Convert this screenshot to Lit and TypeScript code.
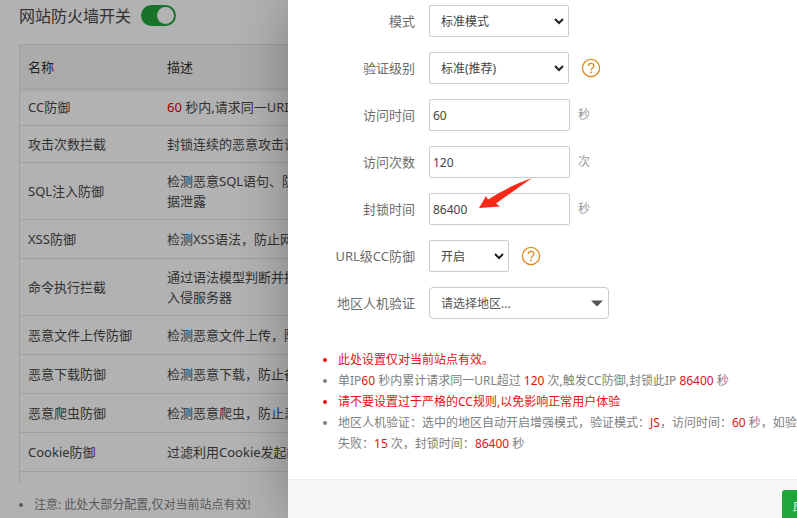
import { LitElement, html, css, svg } from "lit";
import { customElement } from "lit/decorators.js";

const rows: [string, unknown][] = [
  ["CC防御", html`<b class="hot">60</b> 秒内,请求同一URI累计超过`],
  ["攻击次数拦截", "封锁连续的恶意攻击请求"],
  ["SQL注入防御", html`检测恶意SQL语句、防止数<br />据泄露`],
  ["XSS防御", "检测XSS语法，防止网站被攻击"],
  ["命令执行拦截", html`通过语法模型判断并拦截<br />入侵服务器`],
  ["恶意文件上传防御", "检测恶意文件上传，防止网站被攻击"],
  ["恶意下载防御", "检测恶意下载，防止备份文件泄露"],
  ["恶意爬虫防御", "检测恶意爬虫，防止恶意采集"],
  ["Cookie防御", "过滤利用Cookie发起的攻击"],
];

@customElement("help-mark")
class HelpMark extends LitElement {
  static styles = css`
    :host { display: inline-flex; margin-left: 12px; }
    a { display: flex; color: #dd8a23; }
  `;
  render() {
    return html`<a href="#" aria-label="帮助"><svg width="20" height="20" viewBox="0 0 20 20" fill="none" stroke="currentColor">
      ${svg`<circle cx="10" cy="10" r="8.6" stroke-width="1.3"/><path d="M7.3 8.1C7.3 4.5 12.9 4.5 12.9 7.9C12.9 10 10.1 10 10.1 12.3" stroke-width="1.4"/><path d="M10.1 13.6V15.2" stroke-width="1.6"/>`}
    </svg></a>`;
  }
}

@customElement("firewall-page")
class FirewallPage extends LitElement {
  static styles = css`
    :host { display: block; padding: 0 20px 0 19px; color: #484848; }
    .switch-row { display: flex; align-items: center; gap: 10px; height: 30px; font-size: 16px; }
    .toggle {
      appearance: none; width: 35px; height: 21px; margin: 0; padding: 2px;
      border-radius: 11px; background: #20a53a; display: flex; justify-content: flex-end;
    }
    .toggle::before { content: ""; width: 17px; height: 17px; border-radius: 50%; background: #fff; }
    .box { margin-top: 14px; border: 1px solid #e4e4e4; border-bottom: 0; border-right: 0; height: 438px; overflow: hidden; }
    table { border-collapse: separate; border-spacing: 0; width: 100%; font-size: 13px; line-height: 20px; white-space: nowrap; }
    th, td { box-sizing: border-box; padding: 0 8px; text-align: left; font-weight: 400; }
    th { height: 44px; background: #f5f5f5; border-bottom: 1px solid #e8e8e8; color: #333; box-shadow: 0 2px 2px #eee; }
    th:first-child { width: 139px; }
    td { height: 39px; border-bottom: 1px solid #e4e4e4; }
    tr.compact td { height: 37px; }
    tr.tall td { height: 57px; }
    .hot { color: #e60000; font-weight: 400; }
    ul { margin: 11px 0 0; padding: 0 0 0 15px; font-size: 12px; line-height: 21px; color: #808080; }
  `;
  render() {
    return html`
      <div class="switch-row">
        <label for="fw">网站防火墙开关</label>
        <input id="fw" class="toggle" type="checkbox" checked />
      </div>
      <div class="box">
        <table>
          <thead><tr><th>名称</th><th>描述</th></tr></thead>
          <tbody>
            ${rows.map(([name, text], i) => html`<tr class=${i < 2 ? "compact" : typeof text === "string" ? "" : "tall"}><td>${name}</td><td>${text}</td></tr>`)}
          </tbody>
        </table>
      </div>
      <ul><li>注意: 此处大部分配置,仅对当前站点有效!</li></ul>
    `;
  }
}

@customElement("cc-dialog")
class CcDialog extends LitElement {
  static styles = css`
    :host { display: flex; flex-direction: column; background: #fff; box-shadow: 1px 1px 50px rgba(0, 0, 0, 0.3); color: #6c6c6c; }
    form { display: flex; flex-direction: column; gap: 15px; padding-top: 5px; }
    .line { display: flex; align-items: center; height: 32px; font-size: 13px; line-height: 18px; }
    .line > label { width: 127px; margin-right: 14px; text-align: right; }
    .unit { margin-left: 8px; font-size: 12px; color: #999; line-height: 20px; }
    .field { position: relative; display: flex; }
    select, input {
      box-sizing: border-box; appearance: none; height: 32px; margin: 0; border: 1px solid #ccc; border-radius: 2px;
      background: #fff; color: #444; font-family: inherit; font-size: 12px;
    }
    input { width: 141px; padding: 0 3px; }
    select { width: 140px; padding: 0 11px; }
    .short { width: 80px; }
    .area { width: 180px; border-radius: 4px; color: #555; }
    .caret { position: absolute; pointer-events: none; right: 4px; top: 11px; }
    .area + .caret { right: 5px; }
    .arrow { position: absolute; pointer-events: none; z-index: 1; left: 50px; top: -16px; }
    ul { margin: 30px 0 0; padding: 0 38px 0 50px; font-size: 12px; line-height: 21px; color: #808080; }
    .hot { color: #e81010; font-weight: 400; }
    footer { margin-top: 25px; flex: 1; padding: 10px 19px 0 0; box-sizing: border-box; background: #f5f7f7; border-top: 1px solid #e8eded; display: flex; justify-content: flex-end; align-items: flex-start; }
    button { height: 32px; padding: 0 11px; border: 0; border-radius: 3px; background: #20a53a; color: #fff; font-family: inherit; font-size: 12px; }
  `;
  chevron() {
    return html`<svg class="caret" width="12" height="10" viewBox="0 0 12 10"><path d="M2 3L6 7L10 3" fill="none" stroke="#222" stroke-width="2" /></svg>`;
  }
  render() {
    return html`
      <form>
        <div class="line"><label for="mode">模式</label>
          <span class="field"><select id="mode"><option>标准模式</option></select>${this.chevron()}</span></div>
        <div class="line"><label for="level">验证级别</label>
          <span class="field"><select id="level"><option>标准(推荐)</option></select>${this.chevron()}</span><help-mark></help-mark></div>
        <div class="line"><label for="cycle">访问时间</label><input id="cycle" value="60" /><span class="unit">秒</span></div>
        <div class="line"><label for="limit">访问次数</label><input id="limit" value="120" /><span class="unit">次</span></div>
        <div class="line"><label for="block">封锁时间</label>
          <span class="field"><input id="block" value="86400" />
            <svg class="arrow" width="54" height="34" viewBox="0 0 54 34"><path d="M53 1L17 26.5L21 29.5L0 31L7 19L9 22.5Q30 9 53 1Z" fill="#fb2a18" /></svg>
          </span><span class="unit">秒</span></div>
        <div class="line"><label for="url">URL级CC防御</label>
          <span class="field"><select id="url" class="short"><option>开启</option></select>${this.chevron()}</span><help-mark></help-mark></div>
        <div class="line"><label for="area">地区人机验证</label>
          <span class="field"><select id="area" class="area"><option>请选择地区...</option></select>
            <svg class="caret" width="14" height="10" viewBox="0 0 14 10"><path d="M1 2.5H13L7 8.5Z" fill="#555" /></svg></span></div>
      </form>
      <ul>
        <li class="hot">此处设置仅对当前站点有效。</li>
        <li>单IP<b class="hot">60</b> 秒内累计请求同一URL超过 <b class="hot">120</b> 次,触发CC防御,封锁此IP <b class="hot">86400</b> 秒</li>
        <li class="hot">请不要设置过于严格的CC规则,以免影响正常用户体验</li>
        <li>地区人机验证：选中的地区自动开启增强模式，验证模式：<b class="hot">JS</b>，访问时间：<b class="hot">60</b> 秒，如验证失败：<b class="hot">15</b> 次，封锁时间：<b class="hot">86400</b> 秒</li>
      </ul>
      <footer><button type="button">应用</button></footer>
    `;
  }
}

@customElement("app-root")
class AppRoot extends LitElement {
  static styles = css`
    :host { display: block; position: relative; overflow: hidden; height: 100vh; background: #fff; font-family: "Noto Sans", "Noto Sans CJK SC", sans-serif; }
    .shade { position: absolute; inset: 0; background: rgba(0, 0, 0, 0.3); }
    .dialog { position: absolute; top: 0; bottom: 0; left: 288px; right: -50px; }
  `;
  render() {
    return html`<firewall-page></firewall-page><div class="shade"></div><cc-dialog class="dialog"></cc-dialog>`;
  }
}
